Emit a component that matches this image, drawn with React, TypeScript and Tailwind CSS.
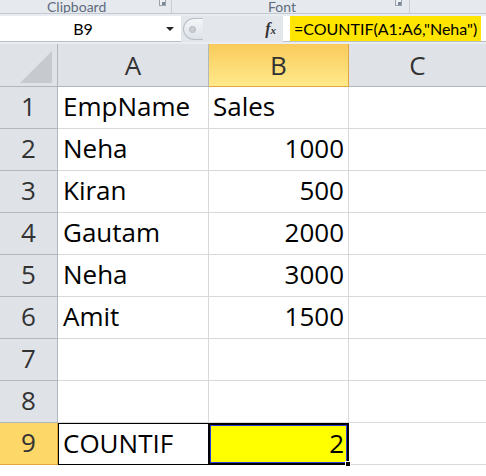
import React from 'react'

const font = { fontFamily: 'Lato, "Open Sans", sans-serif' }
const sheetFont = { fontFamily: '"Open Sans", Lato, sans-serif' }

const rows: [string, string][] = [
  ['EmpName', 'Sales'],
  ['Neha', '1000'],
  ['Kiran', '500'],
  ['Gautam', '2000'],
  ['Neha', '3000'],
  ['Amit', '1500'],
  ['', ''],
  ['', ''],
]

function Launcher() {
  return (
    <span className="inline-block w-[7px] h-[7px] border border-[#9aa3ad] bg-[#eef1f4] relative">
      <span className="absolute right-0 bottom-0 w-[3px] h-[3px] bg-[#7c8794]" />
    </span>
  )
}

export default function App() {
  return (
    <div className="w-[486px] h-[476px] overflow-hidden bg-white" style={font}>
      {/* ribbon group labels, cut off at the top */}
      <div className="h-[14px] flex bg-[#e6eaef] border-b border-[#c3c9d1] overflow-hidden">
        <div className="w-[172px] flex items-end justify-between pl-[47px] pr-[5px] border-r border-[#c8ced6]">
          <span className="text-[14px] leading-none text-[#5d6b7d] -mb-[1px]">Clipboard</span>
          <div className="mb-[1px]"><Launcher /></div>
        </div>
        <div className="w-[238px] flex items-end justify-between pl-[96px] pr-[7px] border-r border-[#c8ced6]">
          <span className="text-[14px] leading-none text-[#5d6b7d] -mb-[1px]">Font</span>
          <div className="mb-[1px]"><Launcher /></div>
        </div>
        <div className="flex-1" />
      </div>
      <div className="h-[2px] bg-[#e9edf1]" />

      {/* formula bar */}
      <div className="h-[26px] flex bg-white border-b border-[#b9c0c8]">
        <div className="w-[181px] flex items-center">
          <span className="flex-1 text-center text-[16px] leading-none text-black">B9</span>
          <span className="w-0 h-0 mr-[7px] border-l-[4px] border-r-[4px] border-t-[4px] border-l-transparent border-r-transparent border-t-[#222]" />
        </div>
        <div className="w-[102px] h-[26px] flex items-center bg-[#e3e7ec]">
          <div className="h-[22px] w-[20px] ml-[2px] rounded-l-full border border-r-0 border-[#b8bec6] bg-gradient-to-b from-[#f4f6f8] to-[#dde2e8] flex items-center pl-[5px]">
            <span className="w-[7px] h-[7px] rounded-full bg-[#c9ced4] border border-[#b3b9c0]" />
          </div>
          <div className="flex-1 flex justify-end pr-[7px]">
            <span className="text-[16px] leading-none italic font-bold text-[#333]" style={{ fontFamily: '"Liberation Serif", serif' }}>
              f<span className="text-[11px]">x</span>
            </span>
          </div>
        </div>
        <div className="flex-1 flex items-center pl-[7px] pr-[5px]">
          <div className="h-[25px] w-full bg-[#ffe500] flex items-center pl-[4px] text-[16px] leading-none text-black whitespace-nowrap">
            =COUNTIF(A1:A6,"Neha")
          </div>
        </div>
      </div>
      <div className="h-[2px] bg-[#e9edf1]" />

      {/* sheet */}
      <div className="grid grid-cols-[58px_151px_140px_137px] text-[26px] leading-none" style={sheetFont}>
        {/* header row */}
        <div className="h-[43px] bg-[#dfe3e8] border-r border-b border-[#b1b7be] flex items-end justify-end pr-[5px] pb-[3px]">
          <span className="w-[32px] h-[32px] bg-[#c6cace] [clip-path:polygon(100%_0,100%_100%,0_100%)]" />
        </div>
        <div className="h-[43px] bg-[#dfe3e8] border-r border-b border-[#b1b7be] flex items-end justify-center pb-[8px] text-[#333]">A</div>
        <div className="h-[43px] bg-gradient-to-b from-[#f9cb5b] to-[#ffe98a] border-r border-b border-[#e0a73e] flex items-end justify-center pb-[8px] text-[#333]">B</div>
        <div className="h-[43px] bg-[#dfe3e8] border-b border-[#b1b7be] flex items-end justify-center pb-[8px] text-[#333]">C</div>

        {rows.map(([a, b], i) => (
          <React.Fragment key={i}>
            <div className="h-[42px] bg-[#dfe3e8] border-r border-b border-[#b1b7be] flex items-end justify-center pb-[9px] text-[#333]">{i + 1}</div>
            <div className="h-[42px] border-r border-b border-[#d9d9d9] flex items-end pl-[5px] pb-[9px] text-black">{a}</div>
            <div className={`h-[42px] border-r border-b border-[#d9d9d9] flex items-end pb-[9px] text-black ${i === 0 ? 'pl-[4px]' : 'justify-end pr-[4px]'}`}>{b}</div>
            <div className="h-[42px] border-b border-[#d9d9d9]" />
          </React.Fragment>
        ))}

        {/* row 9 */}
        <div className="h-[42px] bg-[#fdd868] border-r border-b border-[#e0a73e] flex items-end justify-center pb-[9px] text-[#333]">9</div>
        <div className="h-[42px] border-y border-l border-black flex items-end pl-[4px] pb-[8px] text-black">COUNTIF</div>
        <div className="h-[42px] border-2 border-black relative -ml-px">
          <div className="h-full bg-[#ffff00] border border-[#2a3fd8] flex items-end justify-end pr-[2px] pb-[6px] text-black">2</div>
          <span className="absolute -right-[4px] -bottom-[4px] w-[6px] h-[6px] bg-black border border-white" />
        </div>
        <div className="h-[42px] border-b border-[#d9d9d9]" />
      </div>
    </div>
  )
}
